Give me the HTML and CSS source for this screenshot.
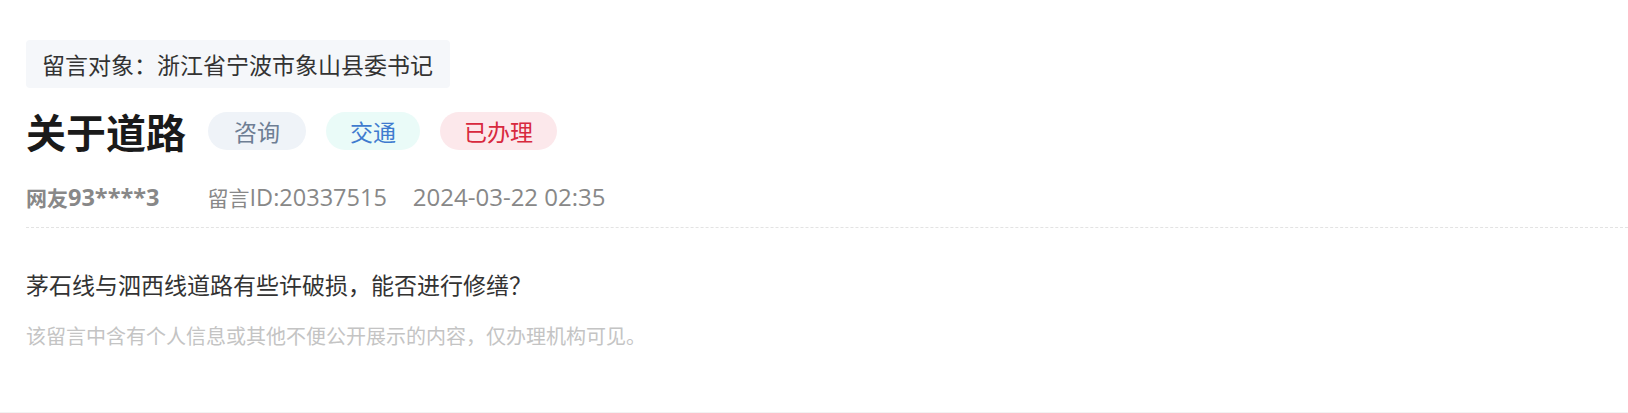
FILE: index.html
```html
<!DOCTYPE html>
<html lang="zh-CN">
<head>
<meta charset="utf-8">
<title>留言详情</title>
<link rel="stylesheet" href="styles.css">
</head>
<body>
<div class="page">
  <div class="target">留言对象：浙江省宁波市象山县委书记</div>
  <div class="title-row">
    <h1 class="title">关于道路</h1>
    <span class="pill pill-gray">咨询</span>
    <span class="pill pill-teal">交通</span>
    <span class="pill pill-red">已办理</span>
  </div>
  <div class="meta">
    <span class="user">网友<span class="num">93****3</span></span>
    <span class="msg-id">留言<span class="num">ID:20337515</span></span>
    <span class="date num">2024-03-22 02:35</span>
  </div>
  <p class="content">茅石线与泗西线道路有些许破损，能否进行修缮？</p>
  <p class="notice">该留言中含有个人信息或其他不便公开展示的内容，仅办理机构可见。</p>
</div>
</body>
</html>
```
FILE: styles.css
```css
html, body {
  margin: 0;
  padding: 0;
  background: #ffffff;
}
body {
  font-family: "Noto Sans CJK SC", "Noto Sans", sans-serif;
}
.page {
  padding: 40px 0 61px 26px;
  border-bottom: 1px solid #f2f2f2;
}
.target {
  display: inline-block;
  height: 48px;
  line-height: 48px;
  padding: 0 17px 0 16px;
  background: #f5f7fa;
  border-radius: 4px;
  font-size: 23px;
  color: #333333;
}
.title-row {
  display: flex;
  align-items: center;
  height: 40px;
  margin-top: 23px;
}
.title {
  margin: 0 22px 0 0;
  font-size: 40px;
  line-height: 40px;
  font-weight: 700;
  color: #1a1a1a;
}
.pill {
  display: inline-flex;
  align-items: center;
  height: 38px;
  padding: 0 24px;
  border-radius: 19px;
  font-size: 23px;
  margin-right: 20px;
}
.pill-gray {
  background: #eff3f8;
  color: #6e7e94;
  padding: 0 26px;
}
.pill-teal {
  background: #eafbf8;
  color: #3f7bcf;
}
.pill-red {
  background: #fce8eb;
  color: #d8293e;
}
.meta {
  display: flex;
  align-items: center;
  margin-top: 31px;
  height: 30px;
  padding-bottom: 15px;
  border-bottom: 1px dashed #e3e3e3;
  font-size: 21px;
  line-height: 30px;
  color: #888888;
}
.num {
  font-family: "Open Sans", "Noto Sans CJK SC", sans-serif;
  font-size: 23.5px;
}
.date {
  font-size: 24px;
}
.user {
  font-weight: 700;
  margin-right: 48px;
}
.msg-id {
  margin-right: 26px;
}
.content {
  margin: 41px 0 0 0;
  font-size: 23px;
  line-height: 30px;
  color: #333333;
}
.notice {
  margin: 22px 0 0 0;
  font-size: 20px;
  line-height: 30px;
  color: #c4c4c4;
}
```
